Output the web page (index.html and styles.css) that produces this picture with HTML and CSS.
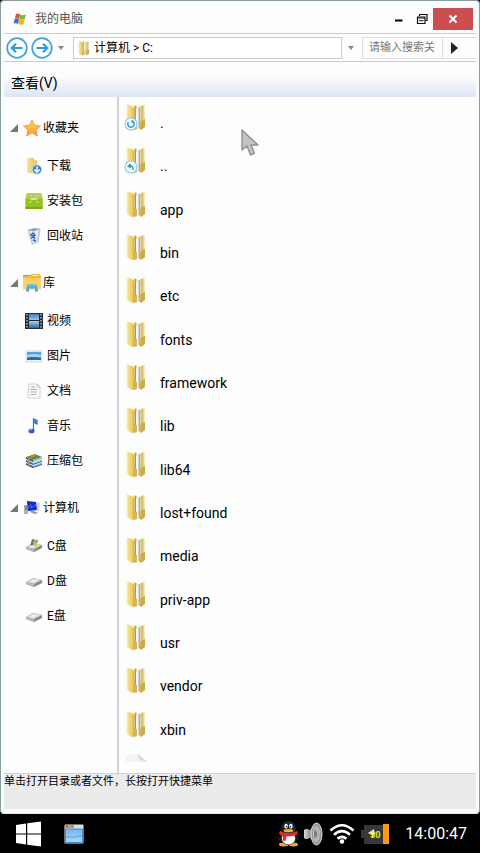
FILE: index.html
```html
<!DOCTYPE html>
<html lang="zh-CN">
<head>
<meta charset="utf-8">
<meta name="viewport" content="width=device-width, initial-scale=1">
<title>我的电脑</title>
<link rel="stylesheet" href="styles.css">
</head>
<body>
<svg class="sprite" aria-hidden="true">
  <defs>
    <linearGradient id="gold" x1="0" x2="1"><stop offset="0" stop-color="#f3dd85"/><stop offset="1" stop-color="#dcb84d"/></linearGradient>
    <linearGradient id="pale" x1="0" x2="1"><stop offset="0" stop-color="#f7e491"/><stop offset="1" stop-color="#e3c460"/></linearGradient>
    <linearGradient id="paper" x1="0" x2="1"><stop offset="0" stop-color="#f4f6f8"/><stop offset="1" stop-color="#8d9cab"/></linearGradient>
    <linearGradient id="sky" x1="0" y1="0" x2="0" y2="1"><stop offset="0" stop-color="#3f7fc6"/><stop offset=".5" stop-color="#a5d2f0"/><stop offset="1" stop-color="#2b64a4"/></linearGradient>
    <linearGradient id="starfill" x1="0" y1="0" x2="0" y2="1"><stop offset="0" stop-color="#ffd75a"/><stop offset="1" stop-color="#f7953a"/></linearGradient>
    <linearGradient id="metal" x1="0" x2="1"><stop offset="0" stop-color="#d8d8d8"/><stop offset=".5" stop-color="#8c8c8c"/><stop offset="1" stop-color="#c4c4c4"/></linearGradient>
    <linearGradient id="pane" x1="0" y1="0" x2="0" y2="1"><stop offset="0" stop-color="#72b5ec"/><stop offset="1" stop-color="#a9dafb"/></linearGradient>
  </defs>
  <symbol id="folder" viewBox="0 0 24 28">
    <path d="M9 4 11 2 13 3V26L9 27Z" fill="#ecd178"/>
    <path d="M11.500 3V25" stroke="#b8994a"/>
    <path d="M12 6 15 4V25L12 26Z" fill="#f6f6f2"/>
    <path d="M14.500 4 16.500 3.500V25L14.500 26Z" fill="#a3b3c4"/>
    <path d="M16.500 3 20.500 2V18L16.500 21Z" fill="#eed47c"/>
    <path d="M18 3V20" stroke="#c9a548" stroke-width=".8"/>
    <path d="M16.500 18 21 16V24L17 27 16 26Z" fill="#d2ab3e"/>
    <path d="M3 1.500 8 3 10 5V26L8 27 3 24Z" fill="url(#pale)"/>
    <path d="M10 5V26" stroke="#c39f45" stroke-width=".8"/>
    <path d="M10 18 13 19V26L9 27Z" fill="#d8b44c"/>
    <path d="M3 1.500V24" stroke="#faf0b9"/>
  </symbol>
  <symbol id="mark-self" viewBox="0 0 14 14">
    <circle cx="7" cy="7" r="6" fill="#fff" stroke="#8ccbed" stroke-width="1.200"/>
    <path d="M4.300 5.200A3.200 3.200 0 1 0 8.500 4.200" fill="none" stroke="#2a97d3" stroke-width="1.500"/><path d="M7.500 2.500 10 4.500 7.400 6.400Z" fill="#2a97d3"/>
  </symbol>
  <symbol id="mark-up" viewBox="0 0 14 14">
    <circle cx="7" cy="7" r="6" fill="#fff" stroke="#8ccbed" stroke-width="1.200"/>
    <path d="M5 6Q9.500 5 9 10" fill="none" stroke="#2a97d3" stroke-width="1.500"/><path d="M6.500 3 3 6.400 7 8.500Z" fill="#2a97d3"/>
  </symbol>
  <symbol id="flag" viewBox="0 0 14 14">
    <path d="M3 2Q5 .8 7.200 2.200L6.200 6.900Q4 5.600 1.800 6.600Z" fill="#e4572e"/><path d="M7.400 2.500Q10 4 12.900 2.400L11.700 7.300Q9 8.300 6.300 7Z" fill="#7fb83a"/>
    <path d="M1.700 6.800Q4 5.900 6.100 7.100L5 11.800Q3 10.600 .6 11.600Z" fill="#3b6fd0"/><path d="M6.300 7.300Q9 8.700 11.600 7.500L10.400 12.400Q8 13.300 5.200 12Z" fill="#f3b526"/>
  </symbol>
  <symbol id="star" viewBox="0 0 16 16"><path d="M8 .8 10.300 5.500 15.500 6.200 11.700 9.800 12.800 15 8 12.400 3.200 15 4.300 9.800 .5 6.200 5.700 5.500Z" fill="url(#starfill)" stroke="#eb9436" stroke-width=".7"/></symbol>
  <symbol id="library" viewBox="0 0 18 18">
    <path d="M0 1H7L8.500 0H16L18 2V15H0Z" fill="#f0b544"/><path d="M1 1.500H6" stroke="#59b36c"/><path d="M9 1.500H15" stroke="#fff0c0"/>
    <path d="M0 4H18V15.500H0Z" fill="#fbd06a"/><path d="M3 17.500 4 11Q9 8.800 14 11L15 17.500H12V14.500H6V17.500Z" fill="#4aa9e0"/><path d="M4.500 12Q9 10 13.500 12" fill="none" stroke="#8cd0f2"/>
  </symbol>
  <symbol id="computer" viewBox="0 0 18 16">
    <path d="M1 5H5V14H1Z" fill="#aeb0b5"/><path d="M2 7H4M2 9H4" stroke="#63656b"/><path d="M4 1 13 2 15 10 5 11Z" fill="#122bc0"/><path d="M5 8Q9 1 8 8L14 4" fill="none" stroke="#5a76e8"/><path d="M13 2 17 3 16 11 14 11Z" fill="#ced3dc"/><path d="M8 11H11L15 13 12 14 7 12Z" fill="#8b98ac"/>
  </symbol>
  <symbol id="download" viewBox="0 0 18 18">
    <path d="M3 2 8 1 10 4V16L3 15Z" fill="url(#pale)" stroke="#dcb85a" stroke-width=".6"/><path d="M9 4 12 3 13 16 8 16Z" fill="url(#gold)"/>
    <circle cx="12" cy="12.500" r="4.600" fill="#377fc8" stroke="#b8d9f2"/><path d="M12 9.500V15M9.300 12.500 12 15.200 14.700 12.500" stroke="#fff" stroke-width="1.500" fill="none"/>
  </symbol>
  <symbol id="package" viewBox="0 0 18 18">
    <path d="M2 1H16L17.500 6V17H.5V6Z" fill="#a6cb2a"/><path d="M.5 7H17.500V17H.5Z" fill="#92c21c"/><path d="M2 1H16L17.500 7H.5Z" fill="#b5cc55"/><path d="M5 8Q9 3 13 8Z" fill="#d5e69c"/><path d="M5.500 3 7 5M12.500 3 11 5M4 11 7 9M14 11 11 9" stroke="#d5e69c"/><path d="M.5 15H17.500V17H.5Z" fill="#7aab16"/>
  </symbol>
  <symbol id="recycle" viewBox="0 0 18 18">
    <path d="M3 3 15 2 13 15 7 17Z" fill="#e9eff4" stroke="#a6b3bf" stroke-width=".8"/><path d="M3 3 9 1 15 2 9 4.500Z" fill="#93a5b5"/><path d="M4 4 8 16M9 5 10 16M14 4 12 14" stroke="#becbd5" stroke-width=".8"/>
    <path d="M6 8 8 6 10 8 8 9ZM6 11 9 10 10 12M8 13 11 14" stroke="#276abf" stroke-width="1.400" fill="none"/>
  </symbol>
  <symbol id="video" viewBox="0 0 18 18">
    <path d="M0 1H18V17H0Z" fill="#262c35"/><path d="M4 2H14V8H4ZM4 9H14V16H4Z" fill="url(#sky)"/><path d="M2 2V17M16 2V17" stroke="#aeb7c2" stroke-width="1.500" stroke-dasharray="1.500 1.500"/>
  </symbol>
  <symbol id="picture" viewBox="0 0 18 18"><path d="M1 4H17V15H1Z" fill="#eef1f4" stroke="#c3c8ce" stroke-width=".6"/><path d="M2 5H16V13H2Z" fill="#5b9fdc"/><path d="M2 8Q9 6 16 8V10H2Z" fill="#a5d2f0"/><path d="M2 13V11Q8 9 16 11V13Z" fill="#2f6f90"/></symbol>
  <symbol id="document" viewBox="0 0 18 18"><path d="M4 2H12L15 4V16H3Z" fill="#fafafa" stroke="#d2d2d2"/><path d="M12 2V5H15" fill="#ddd" stroke="#bbb" stroke-width=".6"/><path d="M6 5H10M5.500 7.500H12M5.500 10H12M5.500 12.500H11" stroke="#aaa"/></symbol>
  <symbol id="music" viewBox="0 0 18 18"><path d="M8.500 14V2L12 3.500V7L9 5.500" fill="#3b88e6" stroke="#2c74da" stroke-width="1.200"/><ellipse cx="6.500" cy="14" rx="3" ry="2.300" fill="#1d60cd"/><path d="M4.800 13.500Q6 12.400 7 13" stroke="#8fc3ff" fill="none"/></symbol>
  <symbol id="archive" viewBox="0 0 18 18">
    <path d="M1 5 10 2 17 5 8 8Z" fill="#5c8646"/><path d="M1 5 8 8V10L1 7Z" fill="#275d96"/><path d="M8 8 17 5V7L8 10Z" fill="#a7b9ad"/>
    <path d="M1 8 8 11 17 8V10L8 13 1 10Z" fill="#286db4"/><path d="M8 11 17 8V9L8 12Z" fill="#b3c8d6"/><path d="M1 11 8 14 17 11V13L8 16 1 13Z" fill="#42538e"/><path d="M8 14 17 11V12L8 15Z" fill="#b8c2d0"/><path d="M9 2.500 12 3.500 5 6.500V14.500L3 13.500V6Z" fill="#c28a36"/>
  </symbol>
  <symbol id="disk" viewBox="0 0 18 18"><path d="M1 10 8 6 17 8V11L9 15 1 12Z" fill="#898989"/><path d="M1 10 8 6 17 8 9 12Z" fill="#d6d6d6"/><path d="M1 10 9 12V14.500L1 12Z" fill="#bababa"/><path d="M4 9.700 8.500 7.400 13 8.300 8.500 10.500Z" fill="#f0f0f0"/><path d="M13 11.500 15 10.500" stroke="#5a9b52"/></symbol>
</svg>

<main class="window">
  <header class="titlebar">
    <svg class="title-icon" aria-hidden="true"><use href="#flag"/></svg>
    <h1>我的电脑</h1>
    <button class="win-btn" aria-label="最小化"><svg viewBox="0 0 12 12"><path d="M2 7.500H9.500" stroke="#000" stroke-width="2"/></svg></button>
    <button class="win-btn" aria-label="还原"><svg viewBox="0 0 12 12"><path d="M3.500 3V1.500H11V7.500H9.500" fill="none" stroke="#111" stroke-width="1.200"/><path d="M1.500 4H9V10.500H1.500Z" fill="#fff" stroke="#111" stroke-width="1.200"/><path d="M1 5H9M3 7.700H7.500" stroke="#111"/></svg></button>
    <button class="win-btn close" aria-label="关闭"><svg viewBox="0 0 12 12"><path d="M2.500 2.500 9.500 9.500M9.500 2.500 2.500 9.500" stroke="#fff" stroke-width="2"/></svg></button>
  </header>

  <form class="navbar">
    <button type="button" class="nav-btn" aria-label="后退"><svg viewBox="0 0 22 22"><circle cx="11" cy="11" r="9.800" fill="#fff" stroke="#3ba3e4" stroke-width="1.700"/><path d="M16.500 11H6M10 6.800 5.800 11 10 15.200" fill="none" stroke="#2f98df" stroke-width="2.200"/></svg></button>
    <button type="button" class="nav-btn" aria-label="前进"><svg viewBox="0 0 22 22"><circle cx="11" cy="11" r="9.800" fill="#fff" stroke="#3ba3e4" stroke-width="1.700"/><path d="M5.500 11H16M12 6.800 16.200 11 12 15.200" fill="none" stroke="#2f98df" stroke-width="2.200"/></svg></button>
    <button type="button" class="drop" aria-label="历史记录"></button>
    <div class="address">
      <svg aria-hidden="true"><use href="#folder"/></svg>
      <input type="text" aria-label="地址" value="计算机 &gt; C:">
    </div>
    <button type="button" class="drop wide" aria-label="展开地址"></button>
    <div class="search">
      <input type="text" aria-label="搜索" placeholder="请输入搜索关">
      <button type="button" aria-label="搜索"></button>
    </div>
  </form>

  <nav class="menubar"><button>查看(V)</button></nav>

  <div class="body">
    <nav class="sidebar">
      <section>
        <h2><button><i></i><svg><use href="#star"/></svg>收藏夹</button></h2>
        <ul>
          <li><a href="#"><svg><use href="#download"/></svg>下载</a></li>
          <li><a href="#"><svg><use href="#package"/></svg>安装包</a></li>
          <li><a href="#"><svg><use href="#recycle"/></svg>回收站</a></li>
        </ul>
      </section>
      <section>
        <h2><button><i></i><svg><use href="#library"/></svg>库</button></h2>
        <ul>
          <li><a href="#"><svg><use href="#video"/></svg>视频</a></li>
          <li><a href="#"><svg><use href="#picture"/></svg>图片</a></li>
          <li><a href="#"><svg><use href="#document"/></svg>文档</a></li>
          <li><a href="#"><svg><use href="#music"/></svg>音乐</a></li>
          <li><a href="#"><svg><use href="#archive"/></svg>压缩包</a></li>
        </ul>
      </section>
      <section>
        <h2><button><i></i><svg><use href="#computer"/></svg>计算机</button></h2>
        <ul>
          <li><a href="#"><svg viewBox="0 0 18 18"><use href="#disk"/><use href="#flag" x="5" y="1" width="9" height="9"/></svg>C盘</a></li>
          <li><a href="#"><svg><use href="#disk"/></svg>D盘</a></li>
          <li><a href="#"><svg><use href="#disk"/></svg>E盘</a></li>
        </ul>
      </section>
    </nav>

    <ul class="files">
      <li><a href="#"><svg viewBox="0 0 24 28"><use href="#folder"/><use href="#mark-self" x="0" y="14" width="14" height="14"/></svg><span>.</span></a></li>
      <li><a href="#"><svg viewBox="0 0 24 28"><use href="#folder"/><use href="#mark-up" x="0" y="14" width="14" height="14"/></svg><span>..</span></a></li>
      <li><a href="#"><svg><use href="#folder"/></svg><span>app</span></a></li>
      <li><a href="#"><svg><use href="#folder"/></svg><span>bin</span></a></li>
      <li><a href="#"><svg><use href="#folder"/></svg><span>etc</span></a></li>
      <li><a href="#"><svg><use href="#folder"/></svg><span>fonts</span></a></li>
      <li><a href="#"><svg><use href="#folder"/></svg><span>framework</span></a></li>
      <li><a href="#"><svg><use href="#folder"/></svg><span>lib</span></a></li>
      <li><a href="#"><svg><use href="#folder"/></svg><span>lib64</span></a></li>
      <li><a href="#"><svg><use href="#folder"/></svg><span>lost+found</span></a></li>
      <li><a href="#"><svg><use href="#folder"/></svg><span>media</span></a></li>
      <li><a href="#"><svg><use href="#folder"/></svg><span>priv-app</span></a></li>
      <li><a href="#"><svg><use href="#folder"/></svg><span>usr</span></a></li>
      <li><a href="#"><svg><use href="#folder"/></svg><span>vendor</span></a></li>
      <li><a href="#"><svg><use href="#folder"/></svg><span>xbin</span></a></li>
      <li class="partial"><svg viewBox="0 0 24 9" aria-hidden="true"><path d="M2 2 14 1 23 9H2Z" fill="#f3f3f3"/><path d="M14 1 16 6 22 8" fill="#ddd" stroke="#ccc" stroke-width=".8"/></svg></li>
    </ul>
  </div>

  <footer class="status">单击打开目录或者文件，长按打开快捷菜单</footer>
</main>

<footer class="taskbar">
  <button aria-label="开始"><svg class="start" viewBox="0 0 26 26"><path d="M1 4 11 2.400V12.400H1ZM12.200 2.200 26 .5V12.400H12.200ZM1 13.600H11V23.600L1 22ZM12.200 13.600H26V25.500L12.200 23.800Z" fill="#fff"/></svg></button>
  <button aria-label="资源管理器"><svg class="explorer" viewBox="0 0 20 20"><rect x=".5" y=".5" width="19" height="19" rx="1" fill="#d9e2e8"/><rect x="1" y="1" width="9" height="3" fill="#e79b51"/><path d="M2 2.500H4" stroke="#d3422c" stroke-width="2"/><path d="M7 2.500H9" stroke="#71a83d" stroke-width="2"/><path d="M1.500 5H18.500V18.500H1.500Z" fill="url(#pane)" stroke="#3e8fd0"/><path d="M2 13Q8 14 18 12" stroke="#5aa5df" fill="none"/></svg></button>
  <div class="tray">
    <svg class="qq" viewBox="0 0 22 27" aria-label="QQ">
      <ellipse cx="6" cy="25" rx="5" ry="2" fill="#f7a81b"/><ellipse cx="16" cy="25" rx="5" ry="2" fill="#f7a81b"/>
      <path d="M3 14 0 20Q1 22 3 19ZM19 14 22 20Q21 22 19 19Z" fill="#182433"/><ellipse cx="11" cy="18" rx="8.500" ry="7.500" fill="#182433"/><ellipse cx="11" cy="18.500" rx="7" ry="6.500" fill="#fff"/>
      <ellipse cx="11" cy="8" rx="7.500" ry="7.500" fill="#1c2839"/><ellipse cx="8.500" cy="6" rx="1.800" ry="2.600" fill="#fff"/><ellipse cx="13.500" cy="6" rx="1.800" ry="2.600" fill="#fff"/><circle cx="9" cy="6.500" r=".8"/><circle cx="13" cy="6.500" r=".8"/>
      <ellipse cx="11" cy="10.500" rx="5" ry="1.700" fill="#fbb21b"/><path d="M2 10.500Q11 16 20 10.500L21 14Q16 17 9 16.500L8 21H5L5 16 1 14Z" fill="#e5292a"/>
    </svg>
    <svg class="sound" viewBox="0 0 20 24" aria-label="音量"><path d="M1 8Q3 6 7 8L14 1V22L7 16Q3 18 1 16Z" fill="url(#metal)"/><ellipse cx="13.500" cy="12" rx="5.500" ry="11" fill="#999" stroke="#d8d8d8"/><ellipse cx="13" cy="12" rx="4" ry="8" fill="#b4b4b4"/><ellipse cx="11.500" cy="12" rx="2.500" ry="3.800" fill="#777"/><path d="M11 9Q9 12 11 15" stroke="#ddd" fill="none"/></svg>
    <svg class="wifi" viewBox="0 0 26 22" aria-label="无线网络"><g fill="none" stroke="#fff" stroke-width="2.600"><path d="M1.500 7.500Q13-3 24.500 7.500"/><path d="M5 11.800Q13 4.500 21 11.800"/><path d="M8.500 15.800Q13 12 17.500 15.800"/></g><circle cx="13" cy="18.500" r="2.300" fill="#fff"/></svg>
    <svg class="battery" viewBox="0 0 28 20" aria-label="电量"><path d="M0 6H3V1H22V20H3V14H0Z" fill="#383838"/><path d="M22 0H28V20H22Z" fill="#ff9812"/><path d="M7 9 13 5V8.500H15L11 14V11Z" fill="#fffbd0"/><text x="9" y="14" class="charge">50</text></svg>
    <time>14:00:47</time>
  </div>
</footer>

<svg class="cursor" viewBox="0 0 18 28" aria-hidden="true"><path d="M1 1V21L6 17 9.500 26 13.500 24 10 16H17Z" fill="#c3c3c3" stroke="#929292" stroke-width="1.400" stroke-linejoin="round"/></svg>
</body>
</html>
```
FILE: styles.css
```css
* {
  box-sizing: border-box;
}

body {
  position: relative;
  display: flex;
  flex-direction: column;
  min-height: 100vh;
  margin: 0;
  background: #000;
  color: #000;
  font: 12px/16px Roboto, "Noto Sans CJK SC", sans-serif;
}

button,
input {
  margin: 0;
  padding: 0;
  border: 0;
  background: none;
  color: inherit;
  font: inherit;
}

svg {
  display: block;
  flex: none;
}

ul {
  margin: 0;
  padding: 0;
  list-style: none;
}

a {
  color: inherit;
  text-decoration: none;
}

.sprite {
  position: absolute;
  width: 0;
  height: 0;
}

.window {
  display: flex;
  flex: 1;
  flex-direction: column;
  padding: 0 3px 4px;
  border: 1px solid #8b9d9e;
  border-bottom-color: #dce6e6;
  border-radius: 4px;
  background: #f8fcfc;
}

.titlebar {
  display: flex;
  align-items: center;
  height: 32px;
  padding: 3px 3px 0 9px;
  background: #fdfdfd;
}

.title-icon {
  width: 14px;
  height: 14px;
}

.titlebar h1 {
  flex: 1;
  margin: 0 0 0 8px;
  color: #555;
  font-size: 12px;
  font-weight: 400;
}

.win-btn {
  display: grid;
  place-items: center;
  width: 23px;
  height: 22px;
}

.win-btn svg {
  width: 12px;
  height: 12px;
}

.close {
  width: 40px;
  background: #c94f50;
}

.navbar {
  display: flex;
  align-items: center;
  height: 29px;
  padding-left: 2px;
  border-top: 1px solid #ccc;
  border-bottom: 1px solid #ccc;
  background: #fdfdfd;
}

.nav-btn {
  width: 25px;
}

.nav-btn svg {
  width: 22px;
  height: 22px;
}

.drop {
  width: 9px;
  height: 22px;
  margin-right: 8px;
}

.drop::before {
  display: block;
  width: 0;
  margin: 0 auto;
  border: 3px solid transparent;
  border-top: 4px solid #888;
  border-bottom: 0;
  content: "";
}

.drop.wide {
  width: 18px;
  margin-right: 2px;
}

.address {
  display: flex;
  flex: 1;
  align-items: center;
  min-width: 0;
  height: 22px;
  padding-left: 3px;
  border: 1px solid #ccc;
  background: #fff;
}

.address svg {
  width: 14px;
  height: 16px;
}

.address input {
  flex: 1;
  min-width: 0;
  padding-left: 3px;
}

.search {
  display: flex;
  width: 114px;
  height: 22px;
  border: 1px solid #ddd;
  border-right: 0;
}

.search input {
  width: 80px;
  padding-left: 6px;
  border-right: 1px solid #ddd;
  font-size: 11px;
}

.search input::placeholder {
  color: #777;
}

.search button {
  padding-left: 8px;
}

.search button::before {
  display: block;
  border: 6px solid transparent;
  border-left: 7px solid #222;
  border-right: 0;
  content: "";
}

.menubar {
  display: flex;
  align-items: center;
  height: 35px;
  padding: 8px 7px 0;
  border-bottom: 1px solid #dfe6f3;
  background: linear-gradient(#fdfdfd 40%, #dde6f6);
}

.menubar button {
  font-size: 14px;
}

.body {
  display: flex;
  flex: 1;
  background: #fdfdfd;
}

.sidebar {
  width: 115px;
  padding-top: 9px;
  border-right: 2px solid #d2d2d2;
}

.sidebar section {
  margin-bottom: 8px;
}

.sidebar h2 {
  margin: 0;
  font: inherit;
}

.sidebar h2 button,
.sidebar a {
  display: flex;
  align-items: center;
}

.sidebar h2 button {
  height: 43px;
  padding-left: 6px;
}

.sidebar h2 svg {
  width: 18px;
  height: 18px;
  margin: 0 2px 0 5px;
}

.sidebar i {
  border-bottom: 8px solid #777;
  border-left: 8px solid transparent;
}

.sidebar a {
  gap: 4px;
  height: 35px;
  padding-left: 21px;
}

.sidebar li:first-child {
  margin-top: -1px;
}

.sidebar a svg {
  width: 18px;
  height: 18px;
}

.files {
  display: flex;
  flex: 1;
  flex-direction: column;
}

.files li {
  flex: 1;
}

.files a {
  display: flex;
  gap: 12px;
  padding: 6px 5px 0;
}

.files svg {
  width: 24px;
  height: 28px;
}

.files span {
  padding-top: 12px;
  font-size: 14px;
}

.files .partial {
  flex: none;
  height: 26px;
  padding: 6px 5px 0;
}

.files .partial svg {
  height: 9px;
}

.status {
  height: 36px;
  border-top: 1px solid #d2d2d2;
  background: #ebebeb;
  font-size: 11px;
  line-height: 15px;
}

.taskbar {
  display: flex;
  align-items: center;
  gap: 23px;
  height: 39px;
  padding: 0 13px 0 15px;
  color: #fff;
}

.start {
  width: 26px;
  height: 26px;
}

.explorer {
  width: 20px;
  height: 20px;
}

.tray {
  display: flex;
  align-items: center;
  gap: 4px;
  margin-left: auto;
}

.qq {
  width: 21px;
  height: 27px;
}

.sound {
  width: 20px;
  height: 24px;
}

.wifi {
  width: 26px;
  height: 22px;
  margin: 0 2px;
}

.battery {
  width: 28px;
  height: 20px;
}

.charge {
  fill: #f2e600;
  font-size: 9px;
  font-weight: 700;
}

.tray time {
  margin-left: 12px;
  font-size: 16px;
}

.cursor {
  position: absolute;
  top: 129px;
  left: 241px;
  width: 18px;
  height: 28px;
}
```
